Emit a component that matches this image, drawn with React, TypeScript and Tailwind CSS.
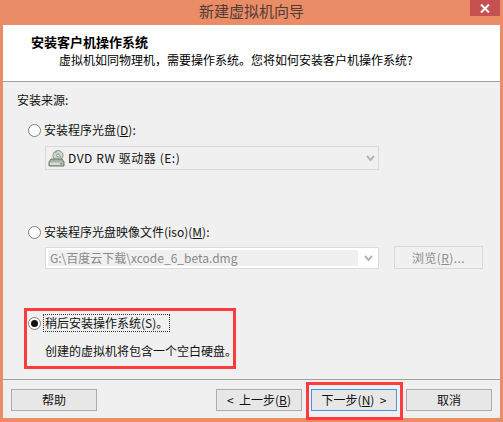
import React from "react";

const font = { fontFamily: '"Noto Sans CJK SC", "Liberation Sans", sans-serif' };

function Radio({ checked = false }: { checked?: boolean }) {
  return (
    <span className="w-[13px] h-[13px] shrink-0 rounded-full border border-[#808080] bg-white flex items-center justify-center">
      {checked && <span className="w-[7px] h-[7px] rounded-full bg-[#111]" />}
    </span>
  );
}

function Chevron() {
  return (
    <svg width="9" height="7" viewBox="0 0 9 7" className="shrink-0">
      <path d="M1 1 L4.5 5 L8 1" fill="none" stroke="#b4b4b4" strokeWidth="2" />
    </svg>
  );
}

function DriveIcon() {
  return (
    <svg width="17" height="17" viewBox="0 0 17 17" className="shrink-0">
      <circle cx="10" cy="5.5" r="5" fill="#cfd6cf" stroke="#8a938a" />
      <circle cx="10" cy="5.5" r="1.5" fill="#f4f4f4" stroke="#7f9a7f" />
      <path d="M7 3 L9 1.5 M12 8 L13 6" stroke="#6bbf6b" strokeWidth="1" />
      <path d="M3 9 L14 9 L16 12 L16 16 L1 16 L1 12 Z" fill="#a9afa9" stroke="#6f756f" />
      <rect x="2" y="12.5" width="13" height="2.5" fill="#d8dcd8" />
      <rect x="12" y="13" width="2.5" height="1.5" fill="#4fae4f" />
    </svg>
  );
}

function Btn({ children, cls = "" }: { children: React.ReactNode; cls?: string }) {
  return (
    <div
      className={`h-[22px] w-[86px] flex items-center justify-center border bg-[#e7e7e7] text-[12px] text-[#111] ${cls || "border-[#adadad]"}`}
    >
      {children}
    </div>
  );
}

export default function App() {
  return (
    <div style={font} className="relative w-[503px] h-[422px] overflow-hidden bg-[#ea8c66] flex flex-col">
      <div className="relative h-[25px] shrink-0 flex items-center justify-center pb-[3px] text-[15px] text-[#4f3d36]">
        新建虚拟机向导
        <div className="absolute right-[3px] top-0 w-[30px] h-[16px] bg-[#c75050] flex items-center justify-center">
          <svg width="10" height="9" viewBox="0 0 10 9">
            <path d="M1 0.5 L9 8.5 M9 0.5 L1 8.5" stroke="#fff" strokeWidth="2" />
          </svg>
        </div>
      </div>

      <div className="mx-[3px] h-[393px] flex flex-col bg-[#f0f0f0] text-[12px] text-[#111]">
        <div className="h-[57px] shrink-0 bg-white border-b border-[#a0a0a0] pl-[28px] pt-[8px]">
          <div className="text-[13px] font-bold leading-[18px] text-black">安装客户机操作系统</div>
          <div className="pl-[28px] leading-[17px] text-black">
            {"虚拟机如同物理机\uFF0C需要操作系统\u3002您将如何安装客户机操作系统?"}
          </div>
        </div>

        <div className="h-[297px] shrink-0 pl-[14px] pt-[9px]">
          <div className="leading-[18px]">安装来源:</div>

          <div className="mt-[12px] ml-[11px] flex items-center gap-[3px] h-[18px]">
            <Radio />
            <span>
              安装程序光盘(<u>D</u>):
            </span>
          </div>
          <div className="mt-[7px] ml-[28px] w-[334px] h-[24px] border border-[#d9d9d9] flex items-center pl-[2px] pr-[3px]">
            <DriveIcon />
            <span className="ml-[3px] flex-1 tracking-[0.55px]">DVD RW 驱动器 (E:)</span>
            <Chevron />
          </div>

          <div className="mt-[53px] ml-[11px] flex items-center gap-[3px] h-[18px]">
            <Radio />
            <span>
              安装程序光盘映像文件(iso)(<u>M</u>):
            </span>
          </div>
          <div className="mt-[5px] ml-[28px] flex items-start">
            <div className="mt-[1px] w-[334px] h-[22px] border border-[#dcdcdc] bg-white flex items-stretch">
              <span className="flex-1 m-[2px] mr-0 pl-[2px] bg-[#f0f0f0] flex items-center text-[#8a8a8a]">
                G:\百度云下载\xcode_6_beta.dmg
              </span>
              <span className="w-[20px] flex items-center justify-center">
                <Chevron />
              </span>
            </div>
            <div className="ml-[15px] w-[89px] h-[23px] border border-[#d9d9d9] flex items-center justify-center text-[#8c8c8c]">
              <span className="tracking-[0.4px]">
                浏览(<u>R</u>)...
              </span>
            </div>
          </div>

          <div className="mt-[45px] ml-[11px] flex items-center gap-[2px] h-[18px]">
            <Radio checked />
            <span className="border border-dotted border-[#333] leading-[16px] px-[1px]">
              稍后安装操作系统(<span>S</span>)。
            </span>
          </div>
          <div className="mt-[10px] ml-[28px] leading-[18px]">创建的虚拟机将包含一个空白硬盘。</div>
        </div>

        <div className="flex-1 border-t border-[#a0a0a0] pl-[8px] pr-[8px] pt-[9px] flex items-start">
          <Btn>帮助</Btn>
          <div className="ml-auto flex gap-[9px]">
            <Btn>
              <span className="whitespace-pre">&lt;  上一步(<u>B</u>)</span>
            </Btn>
            <Btn cls="border-[#3c96ee]">
              <span className="whitespace-pre">下一步(<u>N</u>)  &gt;</span>
            </Btn>
            <Btn>取消</Btn>
          </div>
        </div>
      </div>

      <div className="absolute left-[24px] top-[308px] w-[212px] h-[61px] border-[3px] border-[#ff3b3b]" />
      <div className="absolute left-[306px] top-[382px] w-[97px] h-[38px] border-[3px] border-[#ff3b3b]" />
    </div>
  );
}
